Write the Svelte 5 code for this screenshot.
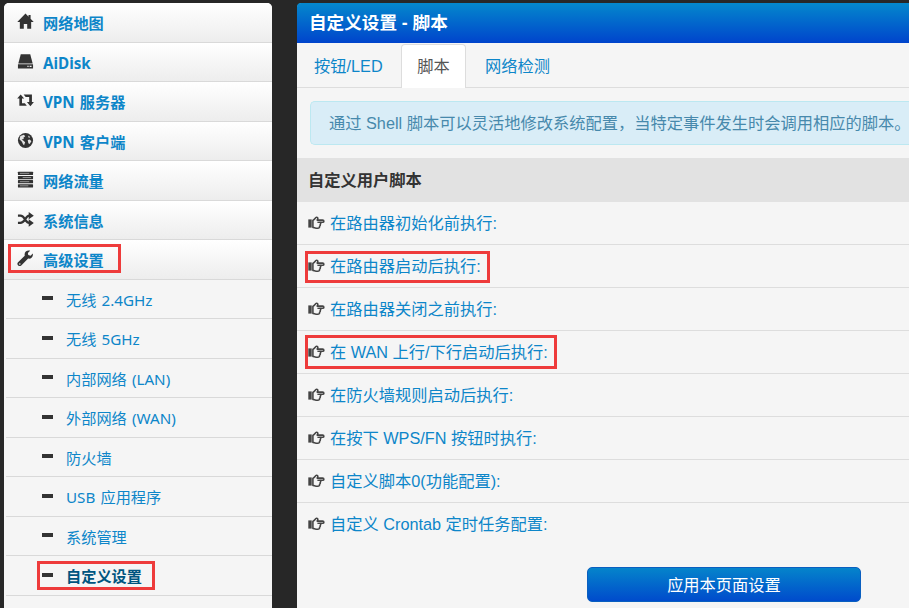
<script>
  const menu = [
    { icon: 'home', label: '网络地图' },
    { icon: 'disk', label: 'AiDisk' },
    { icon: 'retweet', label: 'VPN 服务器' },
    { icon: 'globe', label: 'VPN 客户端' },
    { icon: 'tasks', label: '网络流量' },
    { icon: 'random', label: '系统信息' },
    { icon: 'wrench', label: '高级设置', marked: true }
  ];
  const submenu = [
    { label: '无线 2.4GHz' },
    { label: '无线 5GHz' },
    { label: '内部网络 (LAN)' },
    { label: '外部网络 (WAN)' },
    { label: '防火墙' },
    { label: 'USB 应用程序' },
    { label: '系统管理' },
    { label: '自定义设置', active: true }
  ];
  const scripts = [
    { label: '在路由器初始化前执行:' },
    { label: '在路由器启动后执行:', mark: 'm1' },
    { label: '在路由器关闭之前执行:' },
    { label: '在 WAN 上行/下行启动后执行:', mark: 'm2' },
    { label: '在防火墙规则启动后执行:' },
    { label: '在按下 WPS/FN 按钮时执行:' },
    { label: '自定义脚本0(功能配置):' },
    { label: '自定义 Crontab 定时任务配置:' }
  ];
</script>

{#snippet icon(name)}
  <svg class="icon" viewBox="0 0 18 18" fill="#333">
    {#if name === 'home'}
      <path d="M9 .6 0.3 9.6H3V16.6h4.2v-5h3.6v5H15v-7h2.7L14.4 6.2V2h-2.2v2z" />
    {:else if name === 'disk'}
      <path d="M4 1.2h10l2.6 9.8H1.4z" />
      <path fill-rule="evenodd" d="M1 12h16v4.4H1zM11 13.5v1.4h1.3v-1.4zM13.4 13.5v1.4h2v-1.4z" />
    {:else if name === 'retweet'}
      <path d="M3.9 2.6 0.2 6.8h2.3V14.6h7.9l-2.1-2.6H5.3V6.8h2.3zM7 2.6l2.2 2.6h3.7v5.5h-2.4l3.7 4.3 3.7-4.3h-2.1V2.6z" />
    {:else if name === 'globe'}
      <circle cx="9" cy="9" r="8" />
      <path fill="#e4e4e4" d="M3.6 4.2 7.3 2.8 8.7 4.4 6.8 6 7.2 7.4 4.9 8 6.6 9 8.6 10.9 7.5 14 6.4 13 5.2 10.4 2.6 7.6zM11.6 3.7 14 5.4 12.6 6.4zM11.4 8.6 13.6 8 15.2 9.8 13.4 12.6 12 11.8z" />
    {:else if name === 'tasks'}
      <rect x="1" y="0.8" width="16" height="3.5" rx=".6" />
      <rect x="1" y="5.2" width="16" height="3.5" rx=".6" />
      <rect x="1" y="9.6" width="16" height="3.5" rx=".6" />
      <rect x="1" y="14" width="16" height="3.5" rx=".6" />
      <path d="M3 2.5h10M6 6.9h9M3 11.3h10M3 15.7h9" stroke="#999" stroke-width="1" />
    {:else if name === 'random'}
      <path d="M1 5h2.6c4.7 0 5.4 7.6 9.3 7.6M1 12.6h2.6c4.7 0 5.4-7.6 9.3-7.6" fill="none" stroke="#333" stroke-width="2.4" />
      <path d="M12.4 1 17.8 5l-5.4 3.8zM12.4 8.8l5.4 3.8-5.4 4z" />
    {:else}
      <path fill-rule="evenodd" d="M16.7 3.8 14.4 6l-2.5-.6-.4-2.3 2.4-2.3c-3.6-.9-6.6 1.7-5.7 5.2L1.1 13c-1.2 1.2-.7 2.6.2 3.4 1 .9 2.3.9 3.2-.1l7.3-7.2c3 .7 5.7-1.9 4.9-5.3zM3 14.1a.8.8 0 1 1 0 1.6.8.8 0 0 1 0-1.6z" />
    {/if}
  </svg>
{/snippet}

<div class="page">
  <nav>
    {#each menu as item}
      <a class="item" href="#top">
        {@render icon(item.icon)}
        <span>{item.label}</span>
        {#if item.marked}<i class="mark wide"></i>{/if}
      </a>
    {/each}
    {#each submenu as item}
      <a class="sub" class:active={item.active} href="#top">
        <b class="dash"></b>
        <span>{item.label}</span>
        {#if item.active}<i class="mark narrow"></i>{/if}
      </a>
    {/each}
  </nav>

  <main>
    <h1>自定义设置 - 脚本</h1>
    <div class="tabs">
      <a class="tab first" href="#top">按钮/LED</a>
      <a class="tab current" href="#top">脚本</a>
      <a class="tab last" href="#top">网络检测</a>
    </div>
    <div class="info">通过 Shell 脚本可以灵活地修改系统配置，当特定事件发生时会调用相应的脚本。</div>
    <h2>自定义用户脚本</h2>
    <div class="rows">
      {#each scripts as row}
        <a class="row" href="#top">
          <svg class="hand" viewBox="0 0 17 14">
            <path fill="#444" d="M.3 3.4h3.4v8.2H.3z" />
            <path d="M4.9 4.2C6.6 4 7 1.5 8.6 1.3c1.5-.1 1.6 1.5.6 2.8h5.4c1.7 0 1.7 2.2 0 2.2h-2.4c.8.8.6 1.6 0 2.1.3.8 0 1.5-.6 1.9.1 1.2-.6 1.9-1.9 1.9H8c-1.3 0-1.9-.8-3.1-.8z" fill="none" stroke="#444" stroke-width="1.6" stroke-linejoin="round" />
            <path d="M9.4 6.3h2.8" stroke="#444" stroke-width="1.4" />
          </svg>
          <span>{row.label}</span>
          {#if row.mark}<i class="mark {row.mark}"></i>{/if}
        </a>
      {/each}
    </div>
    <div class="actions"><button>应用本页面设置</button></div>
  </main>
</div>

<style>
  :global(body) { background: #272727; overflow: hidden; }
  .page {
    width: 909px; height: 608px; overflow: hidden; box-sizing: border-box;
    padding: 3px 0 0 4px; display: flex; gap: 25px;
    background: #272727;
    font-family: "Liberation Sans", "Noto Sans CJK SC", sans-serif;
    font-size: 16.25px; color: #333;
  }
  a { color: #0d86c9; text-decoration: none; white-space: nowrap; }
  nav {
    width: 268px; height: 640px; flex: none; background: #f5f5f5;
    border-radius: 5px 5px 0 0; box-sizing: border-box;
    font-family: "Noto Sans", "Noto Sans CJK SC", sans-serif; font-size: 15.2px;
    word-spacing: 1.2px;
  }
  .item, .sub {
    position: relative; display: flex; align-items: center; height: 39.53px;
    box-sizing: border-box; border-bottom: 1px solid #d9d9d9; line-height: 20px;
  }
  .item {
    padding-left: 13px; gap: 9px; font-weight: 700;
    background: linear-gradient(#fff, #ededed);
  }
  .item:first-child { border-radius: 5px 5px 0 0; }
  .item span, .sub span { padding-top: 2px; }
  .icon { width: 17px; height: 17px; flex: none; margin-top: -1px; }
  .sub { margin-left: 2px; padding-left: 36px; gap: 13px; }
  .dash { width: 11px; height: 4px; background: #333; margin-top: -1px; }
  .sub.active { color: #005580; font-weight: 700; }
  .mark { position: absolute; box-sizing: border-box; border: 3px solid #ee3b3b; }
  .wide { left: 4px; top: 4px; width: 113px; height: 29px; }
  .narrow { left: 31px; top: 5px; width: 118px; height: 29px; }

  main { width: 640px; height: 640px; flex: none; background: #f5f5f5; border-radius: 5px 0 0 0; }
  h1 {
    margin: 0; height: 40px; padding-left: 12px; line-height: 40px;
    font-size: 17.6px; color: #fff; border-radius: 4px 0 0 0;
    background: linear-gradient(#0488cc, #0044cc);
  }
  .tabs {
    display: flex; height: 45px; box-sizing: border-box; padding-top: 1px;
    border-bottom: 1px solid #ddd; line-height: 45px;
  }
  .tab.first { width: 87px; padding-left: 17px; }
  .tab.current {
    width: 65px; height: 44px; box-sizing: border-box; text-align: center; color: #555;
    background: #fff; border: 1px solid #ddd; border-bottom: 0; border-radius: 4px 4px 0 0;
    line-height: 43px;
  }
  .tab.last { padding-left: 19px; }
  .info {
    margin: 13px 0 13px 13px; height: 44px; box-sizing: border-box; padding-left: 18px;
    line-height: 43px; color: #4789ac; background: #d9edf7; white-space: nowrap;
    border: 1px solid #bce8f1; border-right: 0; border-radius: 5px 0 0 5px;
  }
  h2 {
    margin: 0; height: 44px; padding-left: 11px; line-height: 44px; background: #e2e2e2;
    font-size: 16.25px; font-weight: 700; color: #333;
  }
  .row {
    position: relative; display: flex; align-items: center; gap: 5px; height: 43px;
    box-sizing: border-box; padding-left: 11px; border-bottom: 1px solid #ddd;
  }
  .row span { padding-bottom: 2px; }
  .row:last-child { border-bottom-color: transparent; }
  .hand { width: 17px; height: 14px; flex: none; margin-top: -1px; }
  .m1 { left: 8px; top: 6px; width: 185px; height: 32px; }
  .m2 { left: 8px; top: 4px; width: 252px; height: 34px; }
  .actions { padding: 21px 0 0 290px; }
  button {
    width: 274px; height: 35px; border: 1px solid #0a5fc0; border-radius: 5px; padding: 0 0 2px;
    font: inherit; color: #fff; background: linear-gradient(#0584cb, #004bcc);
    display: block;
  }
</style>
